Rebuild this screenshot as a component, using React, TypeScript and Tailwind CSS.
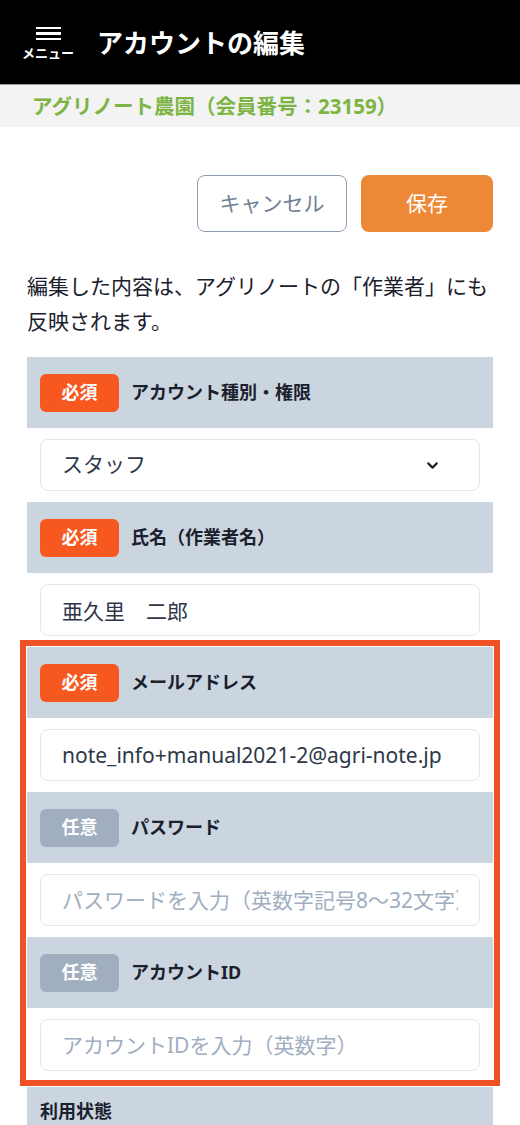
import { ChevronDown } from "lucide-react"

type Field = {
  label: string
  required: boolean
  value?: string
  placeholder?: string
  select?: boolean
}

const fields: Field[] = [
  { label: "アカウント種別・権限", required: true, value: "スタッフ", select: true },
  { label: "氏名（作業者名）", required: true, value: "亜久里　二郎" },
  { label: "メールアドレス", required: true, value: "note_info+manual2021-2@agri-note.jp" },
  { label: "パスワード", required: false, placeholder: "パスワードを入力（英数字記号8〜32文字）" },
  { label: "アカウントID", required: false, placeholder: "アカウントIDを入力（英数字）" },
]

function Badge({ required }: { required: boolean }) {
  return (
    <span
      className={
        required
          ? "flex h-[38px] w-[79px] items-center justify-center rounded-[6px] bg-[#f6581f] text-[18px] font-bold text-white"
          : "flex h-[38px] w-[79px] items-center justify-center rounded-[6px] bg-[#a0aec0] text-[18px] font-bold text-white"
      }
    >
      {required ? "必須" : "任意"}
    </span>
  )
}

function FormSection({ field }: { field: Field }) {
  return (
    <div>
      <div className="flex h-[71px] items-center gap-[12px] bg-[#cbd5e0] px-[13px]">
        <Badge required={field.required} />
        <span className="text-[18px] font-bold text-[#1a202c]">{field.label}</span>
      </div>
      <div className="px-[13px] py-[11px]">
        {field.select ? (
          <div className="flex h-[52px] items-center justify-between rounded-[8px] border border-[#e2e8f0] pl-[21px] pr-[38px] text-[21px] text-[#2d3748]">
            <span>{field.value}</span>
            <ChevronDown size={17} strokeWidth={3} className="text-[#1a202c]" />
          </div>
        ) : (
          <input
            readOnly
            defaultValue={field.value}
            placeholder={field.placeholder}
            className="block h-[52px] w-full rounded-[8px] border border-[#e2e8f0] px-[21px] text-[21px] text-[#2d3748] outline-none placeholder:text-[#a0aec0]"
          />
        )}
      </div>
    </div>
  )
}

export default function App() {
  return (
    <div className="min-h-[1125px] w-[520px] overflow-hidden bg-white font-['Noto_Sans','Noto_Sans_CJK_JP',sans-serif]">
      <header className="flex h-[84px] items-center bg-black pl-[22px]">
        <div className="flex w-[52px] flex-col items-center pt-[4px]">
          <div className="flex w-[25px] flex-col gap-[3px]">
            <span className="h-[2.5px] bg-white" />
            <span className="h-[2.5px] bg-white" />
            <span className="h-[2.5px] bg-white" />
          </div>
          <span className="mt-[5px] text-[13px] leading-[16px] font-bold text-white">メニュー</span>
        </div>
        <h1 className="ml-[23px] pt-[2px] text-[26px] font-bold text-white">アカウントの編集</h1>
      </header>
      <div className="flex h-[43px] items-center border-t border-[#9a9a9a] bg-[#f3f3f3] pl-[32px]">
        <span className="text-[20.5px] font-bold text-[#7db544]">アグリノート農園（会員番号：23159）</span>
      </div>

      <main className="px-[27px]">
        <div className="flex justify-end gap-[14px] pt-[48px]">
          <button className="h-[57px] w-[150px] rounded-[8px] border-[1.5px] border-[#8c9bb0] text-[21px] text-[#718096]">
            キャンセル
          </button>
          <button className="h-[57px] w-[132px] rounded-[8px] bg-[#ed8936] text-[21px] text-white">保存</button>
        </div>

        <p className="mt-[37px] mb-[18px] text-[21px] leading-[35px] text-[#1a202c]">
          編集した内容は、アグリノートの「作業者」にも反映されます。
        </p>

        <FormSection field={fields[0]} />
        <FormSection field={fields[1]} />

        <div className="relative mb-[5px]">
          {fields.slice(2).map((f) => (
            <FormSection key={f.label} field={f} />
          ))}
          <div className="pointer-events-none absolute -top-[7px] -right-[7px] -bottom-[4px] -left-[7px] border-[6px] border-[#ef5024]" />
        </div>

        <div className="flex h-[60px] items-start bg-[#cbd5e0] px-[13px] pt-[12px]">
          <span className="text-[18px] leading-[24px] font-bold text-[#1a202c]">利用状態</span>
        </div>
      </main>
    </div>
  )
}
